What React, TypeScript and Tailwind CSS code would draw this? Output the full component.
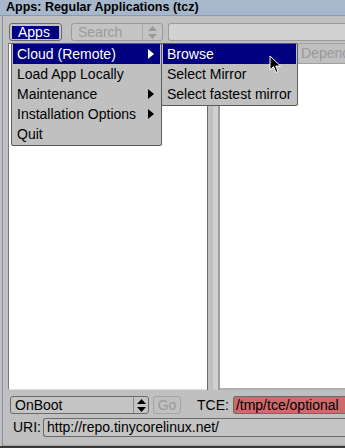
import React from "react"

const font = { fontFamily: '"Liberation Sans", Arial, sans-serif' }

function UpDown({ color = "#000" }: { color?: string }) {
  return (
    <svg width="9" height="13" viewBox="0 0 9 13">
      <path d="M4.5 0 L9 5 L0 5 Z" fill={color} />
      <path d="M0 8 L9 8 L4.5 13 Z" fill={color} />
    </svg>
  )
}

function Cursor() {
  return (
    <svg width="13" height="19" viewBox="0 0 13 19">
      <path d="M1 1 L1 15 L4.5 11.5 L7 17.5 L9 16.5 L6.8 11 L11.5 11 Z" fill="#000" stroke="#fff" strokeWidth="1" />
    </svg>
  )
}

export default function App() {
  const mainMenu = [
    { label: "Cloud (Remote)", sub: true, active: true },
    { label: "Load App Locally", sub: false },
    { label: "Maintenance", sub: true },
    { label: "Installation Options", sub: true },
    { label: "Quit", sub: false },
  ]
  const cloudMenu = ["Browse", "Select Mirror", "Select fastest mirror"]

  return (
    <div className="relative w-[345px] h-[448px] overflow-hidden bg-[#c0c0c0] text-[14px] text-black" style={font}>
      {/* title bar */}
      <div className="h-[16px] bg-[#a8b8cc] border-b border-[#8a9ab0] pl-[6px] text-[12.5px] font-bold leading-[15px]">
        Apps: Regular Applications (tcz)
      </div>

      <div className="flex flex-col h-[432px] border-l-[3px] border-[#c0c0c0]">
        <div className="flex flex-col flex-1 border-l border-[#8090a8] -ml-[1px]">
          {/* toolbar */}
          <div className="flex items-center h-[18px] mt-[7px] pl-[6px] gap-[9px]">
            <div className="shrink-0 w-[53px] h-[18px] rounded-[3px] border border-[#6a6a6a] bg-[#c4c4c4] p-[2px] flex items-center">
              <div className="h-[13px] w-[47px] bg-[#000080] text-white leading-[13px] pl-[6px]">Apps</div>
            </div>
            <div className="shrink-0 w-[92px] h-[18px] rounded-[3px] border border-[#9a9a9a] bg-[#c4c4c4] flex items-center text-[#9a9a9a]">
              <span className="flex-1 pl-[6px] leading-[16px]">Search</span>
              <div className="w-[20px] h-full border-l border-[#a8a8a8] flex items-center justify-center">
                <UpDown color="#9a9a9a" />
              </div>
            </div>
            <div className="flex-1 h-[18px] rounded-l-[3px] border border-r-0 border-[#9a9a9a] bg-[#d2d2d2] -ml-[4px]" />
          </div>

          {/* panels */}
          <div className="flex mt-[2px] h-[347px]">
            <div className="shrink-0 w-[199px] ml-[5px] border-t border-l border-[#7a7a7a] border-b border-b-[#e0e0e0] bg-white" />
            <div className="shrink-0 w-[13px] flex">
              <div className="w-[1px] bg-[#6a6a6a]" />
              <div className="w-[5px] bg-[#c0c0c0]" />
              <div className="w-[5px] bg-[#d0d0d0]" />
              <div className="w-[2px] bg-[#9c9c9c]" />
            </div>
            <div className="flex-1 min-w-0 flex flex-col">
              <div className="h-[20px] flex items-end overflow-hidden">
                <div className="ml-[77px] h-[20px] flex-1 whitespace-nowrap border-t border-l border-[#a0a0a0] rounded-tl-[3px] pl-[3px] text-[#9a9a9a] leading-[19px]">
                  Dependencies
                </div>
              </div>
              <div className="flex-1 bg-white border-t border-[#a0a0a0] border-b-2 border-b-[#b0b0b0]" />
            </div>
          </div>

          {/* bottom row 1 */}
          <div className="flex items-center h-[18px] mt-[6px] pl-[7px]">
            <div className="shrink-0 w-[139px] h-[18px] rounded-[3px] border border-[#6a6a6a] bg-[#c4c4c4] flex items-center">
              <span className="flex-1 pl-[4px] leading-[16px]">OnBoot</span>
              <div className="w-[15px] h-full border-l border-[#8a8a8a] flex items-center justify-center">
                <UpDown />
              </div>
            </div>
            <div className="shrink-0 ml-[4px] w-[28px] h-[18px] rounded-[3px] border border-[#a4a4a4] text-[#9a9a9a] flex items-center justify-center leading-[16px]">
              Go
            </div>
            <span className="ml-[16px] leading-[18px]">TCE:</span>
            <div className="ml-[4px] flex-1 h-[18px] rounded-l-[3px] border border-r-0 border-[#6a6a6a] bg-[#cc6b6b] pl-[2px] leading-[16px] whitespace-nowrap overflow-hidden">
              /tmp/tce/optional
            </div>
          </div>

          {/* bottom row 2 */}
          <div className="flex items-center h-[19px] mt-[4px] pl-[10px]">
            <span className="leading-[19px]">URI:</span>
            <div className="ml-[2px] flex-1 h-[19px] rounded-l-[3px] border border-r-0 border-[#6a6a6a] bg-[#c4c4c4] pl-[3px] leading-[17px]">
              http://repo.tinycorelinux.net/
            </div>
          </div>

          <div className="mt-auto h-[3px] border-t border-[#a0a0a0]" />
        </div>
      </div>
      <div className="absolute left-0 right-0 bottom-0 h-[2px] bg-[#3a3a3a]" />

      {/* main menu */}
      <div className="absolute left-[11px] top-[43px] w-[151px] h-[103px] bg-[#c0c0c0] border border-[#5a5a5a] rounded-[2px] px-[1px]">
        {mainMenu.map((m) => (
          <div
            key={m.label}
            className={`h-[20px] flex items-center pl-[4px] pr-[6px] ${m.active ? "bg-[#000080] text-white" : ""}`}
          >
            <span className="flex-1 leading-[20px]">{m.label}</span>
            {m.sub && (
              <svg width="6" height="10" viewBox="0 0 6 10">
                <path d="M0 0 L6 5 L0 10 Z" fill={m.active ? "#fff" : "#000"} />
              </svg>
            )}
          </div>
        ))}
      </div>

      {/* submenu */}
      <div className="absolute left-[161px] top-[43px] w-[137px] h-[63px] bg-[#c0c0c0] border border-[#5a5a5a] rounded-[2px] px-[1px]">
        {cloudMenu.map((s, i) => (
          <div
            key={s}
            className={`h-[20px] pl-[4px] leading-[20px] ${i === 0 ? "bg-[#000080] text-white" : ""}`}
          >
            {s}
          </div>
        ))}
      </div>

      <div className="absolute left-[269px] top-[55px]">
        <Cursor />
      </div>
    </div>
  )
}
